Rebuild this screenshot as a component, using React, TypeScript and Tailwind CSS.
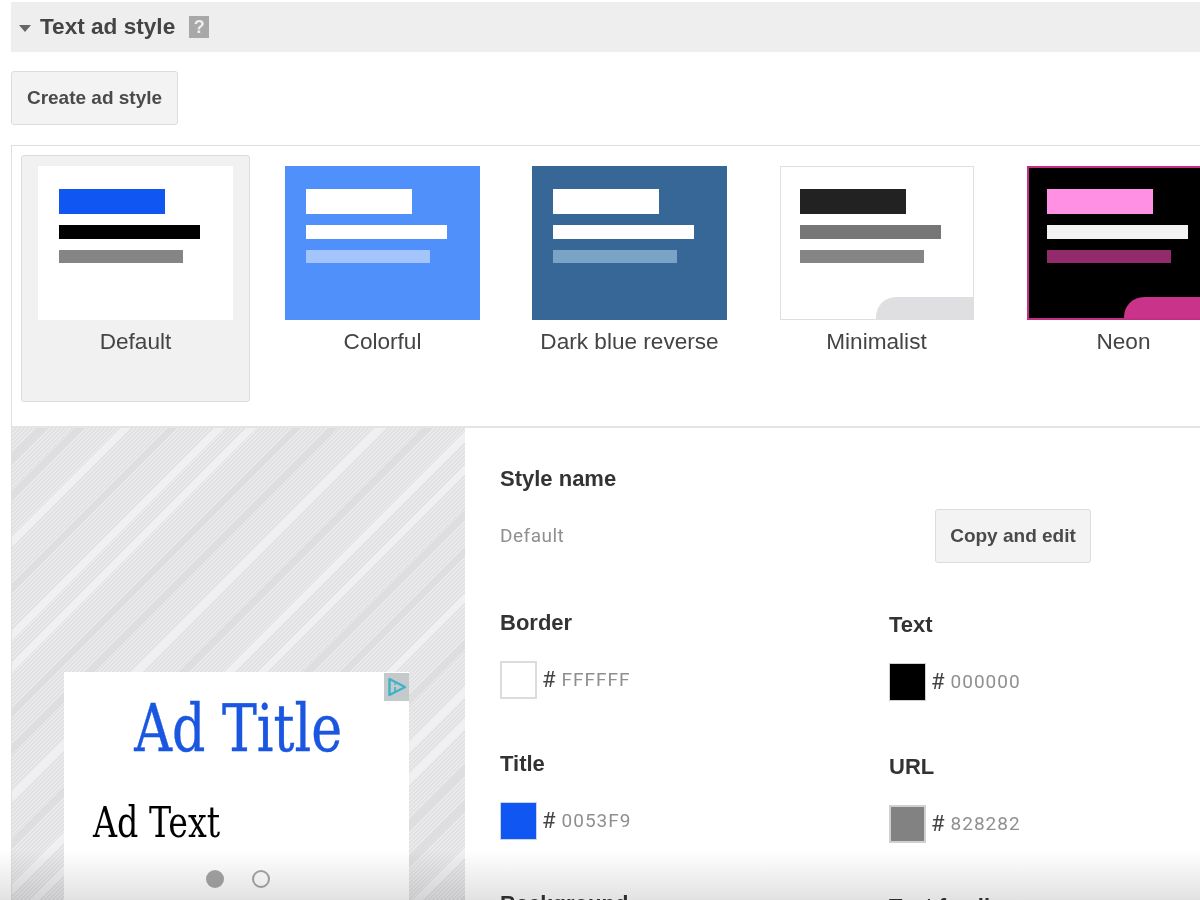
const styles = [
  {
    name: 'Default',
    thumb: 'bg-white w-[195px] pl-[21px] pt-[23px]',
    bars: ['bg-[#0f56f2]', 'bg-black', 'bg-[#858585]'],
    corner: '',
  },
  {
    name: 'Colorful',
    thumb: 'bg-[#4f90fa] w-[195px] pl-[21px] pt-[23px]',
    bars: ['bg-white', 'bg-white', 'bg-[#a3c5fb]'],
    corner: '',
  },
  {
    name: 'Dark blue reverse',
    thumb: 'bg-[#366797] w-[195px] pl-[21px] pt-[23px]',
    bars: ['bg-white', 'bg-white', 'bg-[#7ba3c6]'],
    corner: '',
  },
  {
    name: 'Minimalist',
    thumb: 'bg-white border border-[#dfdfe1] ml-px w-[194px] pl-[19px] pt-[22px]',
    bars: ['bg-[#222222]', 'bg-[#767676]', 'bg-[#858585]'],
    corner: 'bg-[#dfdfe1] w-[97px] h-[22px]',
  },
  {
    name: 'Neon',
    thumb: 'bg-black border-2 border-[#c42f86] ml-px w-[194px] pl-[18px] pt-[21px]',
    bars: ['bg-[#ff90e4]', 'bg-[#f2f2f2]', 'bg-[#922a6c]'],
    corner: 'bg-[#c93389] w-[95px] h-[21px]',
  },
]

function StyleCard({ item, selected }: { item: (typeof styles)[number]; selected: boolean }) {
  return (
    <div
      className={`w-[229px] h-[247px] shrink-0 rounded-[3px] pt-[10px] ${
        selected ? 'bg-[#f1f1f2] border border-[#dcdcdc] -mt-px -ml-px px-[16px]' : 'px-[17px]'
      }`}
    >
      <div className={`relative h-[154px] overflow-hidden ${item.thumb}`}>
        <div className={`w-[106px] h-[25px] ${item.bars[0]}`} />
        <div className={`w-[141px] h-[14px] mt-[11px] ${item.bars[1]}`} />
        <div className={`w-[124px] h-[13px] mt-[11px] ${item.bars[2]}`} />
        {item.corner && <div className={`absolute right-0 bottom-0 rounded-tl-[20px] ${item.corner}`} />}
      </div>
      <div className="mt-[8px] text-center text-[22.6px] leading-[28px] text-[#444444] font-['Liberation_Sans',sans-serif]">
        {item.name}
      </div>
    </div>
  )
}

function FieldLabel({ children, spacing }: { children: string; spacing: string }) {
  return (
    <div className={`text-[22px] leading-[28px] font-bold text-[#333333] font-['Liberation_Sans',sans-serif] ${spacing}`}>
      {children}
    </div>
  )
}

function ColorField({ label, value, swatch, spacing }: { label: string; value: string; swatch: string; spacing: string }) {
  return (
    <div>
      <FieldLabel spacing={spacing}>{label}</FieldLabel>
      <div className="mt-[24px] flex items-center">
        <div className={`w-[37px] h-[38px] ${swatch}`} />
        <span className="ml-[5px] text-[22px] leading-[28px] text-[#444444]">#</span>
        <span className="ml-[6px] text-[19px] leading-[28px] tracking-[1px] text-[#8f8f8f]">{value}</span>
      </div>
    </div>
  )
}

export default function App() {
  return (
    <div className="relative w-[1200px] h-[900px] overflow-hidden bg-white pt-[2px] pl-[11px] font-['Roboto',sans-serif]">
      {/* header */}
      <div className="h-[50px] bg-[#eeeeef] flex items-center pl-[8px] font-['Liberation_Sans',sans-serif]">
        <svg width="12" height="7" viewBox="0 0 12 7" className="mt-[2px]">
          <path d="M0 0h12L6 7z" fill="#666666" />
        </svg>
        <h2 className="ml-[9px] text-[22.6px] font-bold text-[#444444]">Text ad style</h2>
        <div className="ml-[14px] w-[20px] h-[22px] bg-[#a8a8a8] flex items-center justify-center text-[18px] font-bold text-[#eeeeee]">
          ?
        </div>
      </div>

      <button className="mt-[19px] block w-[167px] h-[54px] rounded-[3px] bg-[#f3f3f4] border border-[#dcdcdc] text-[19px] font-bold text-[#4a4a4a] font-['Liberation_Sans',sans-serif]">
        Create ad style
      </button>

      {/* style picker */}
      <div className="mt-[20px] w-[1300px] border border-[#dfdfdf]">
        <div className="h-[280px] flex gap-[18px] pl-[10px] pt-[10px]">
          {styles.map((item, i) => (
            <StyleCard key={item.name} item={item} selected={i === 0} />
          ))}
        </div>

        <div className="flex border-t-2 border-[#e4e4e4]">
          {/* preview */}
          <div className="w-[453px] h-[480px] shrink-0 pl-[52px] pt-[244px] bg-[repeating-linear-gradient(135deg,transparent_0,transparent_18px,#dedee0_18px,#dedee0_25px,transparent_25px,transparent_44px,#dedee0_44px,#dedee0_51px,transparent_51px,transparent_77px,#f0f0f2_77px,#f0f0f2_84px,transparent_84px,transparent_110px,#dedee0_110px,#dedee0_117px,transparent_117px,transparent_143px,#f0f0f2_143px,#f0f0f2_150px,transparent_150px,transparent_166px,#f0f0f2_166px,#f0f0f2_173px,transparent_173px,transparent_180px),repeating-linear-gradient(135deg,#e0e0e2_0,#e0e0e2_1.414px,#ebebed_1.414px,#ebebed_2.828px)]">
            <div className="relative w-[345px] h-[240px] bg-white">
              <div className="absolute top-[1px] right-0 w-[25px] h-[28px] bg-[#c4cacb] flex items-center justify-center">
                <svg width="20" height="20" viewBox="0 0 20 20" fill="none">
                  <path d="M2.5 2 L18 10 L2.5 18 Z" stroke="#3fb3c6" strokeWidth="2.4" strokeLinejoin="round" />
                  <path d="M8 6.5v1.5M8 10v4.5" stroke="#3fb3c6" strokeWidth="1.6" />
                </svg>
              </div>
              <div className="pt-[17px] pl-[3px] text-center text-[66px] leading-[80px] text-[#1a56e0] [-webkit-text-stroke:0.4px_#1a56e0] font-['DejaVu_Serif_Condensed','DejaVu_Serif',serif]">
                <span className="inline-block scale-x-[0.88]">Ad Title</span>
              </div>
              <div className="mt-[24px] pl-[29px] text-[43px] leading-[58px] text-black font-['DejaVu_Serif_Condensed','DejaVu_Serif',serif]">
                <span className="inline-block origin-left scale-x-[0.86]">Ad Text</span>
              </div>
              <div className="mt-[19px] flex justify-center gap-[28px] pl-[3px]">
                <div className="w-[18px] h-[18px] rounded-full bg-[#a6a6a6]" />
                <div className="w-[18px] h-[18px] rounded-full border-2 border-[#a6a6a6] bg-white" />
              </div>
            </div>
          </div>

          {/* settings */}
          <div className="w-[700px] pl-[35px] pt-[37px] flex">
            <div className="w-[389px]">
              <FieldLabel spacing="">Style name</FieldLabel>
              <div className="mt-[16px] flex items-center justify-between h-[54px]">
                <span className="text-[19px] tracking-[0.5px] text-[#8f8f8f]">Default</span>
                <button className="mr-[-202px] w-[156px] h-[54px] rounded-[3px] bg-[#f3f3f4] border border-[#dcdcdc] text-[19px] font-bold text-[#4a4a4a] shrink-0 font-['Liberation_Sans',sans-serif]">
                  Copy and edit
                </button>
              </div>
              <ColorField label="Border" value="FFFFFF" swatch="bg-white border-2 border-[#dcdcdc]" spacing="mt-[46px]" />
              <ColorField label="Title" value="0053F9" swatch="bg-[#0f56f2] border border-[#c8d4ea]" spacing="mt-[51px]" />
              <FieldLabel spacing="mt-[50px]">Background</FieldLabel>
            </div>
            <div className="pt-[146px]">
              <ColorField label="Text" value="000000" swatch="bg-black border border-[#d0d0d0]" spacing="" />
              <ColorField label="URL" value="828282" swatch="bg-[#828282] border-2 border-[#d0d0d0]" spacing="mt-[52px]" />
              <FieldLabel spacing="mt-[50px]">Text family</FieldLabel>
            </div>
          </div>
        </div>
      </div>

      <div className="absolute left-0 right-0 bottom-0 h-[50px] pointer-events-none mix-blend-multiply bg-gradient-to-b from-white to-[#e2e2e2]" />
    </div>
  )
}
